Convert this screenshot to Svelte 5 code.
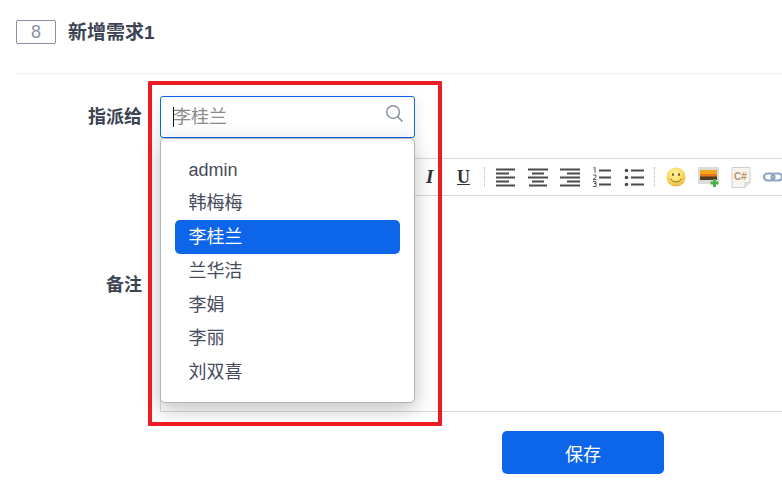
<script lang="ts">
	const users = ['admin', '韩梅梅', '李桂兰', '兰华洁', '李娟', '李丽', '刘双喜'];
	let selected = $state('李桂兰');
</script>

<div class="page">
	<header class="head">
		<span class="req-id">8</span>
		<h1 class="req-title">新增需求1</h1>
	</header>

	<form class="form" onsubmit={(e) => e.preventDefault()}>
		<div class="row">
			<label class="label" for="assign">指派给</label>
			<div class="picker">
				<input id="assign" class="search" placeholder={selected} />
				<i class="caret"></i>
				<svg class="search-icon" viewBox="0 0 20 20" width="19" height="19" fill="none" stroke="#8e93a6" stroke-width="1.6">
					<circle cx="8.5" cy="8.5" r="6.7" />
					<path d="M13.6 13.6 18 18" stroke-linecap="round" />
				</svg>
				<ul class="menu">
					{#each users as user}
						<li class="option" class:active={user === selected}>{user}</li>
					{/each}
				</ul>
			</div>
		</div>

		<div class="row note">
			<span class="label">备注</span>
			<div class="editor">
				<div class="toolbar">
					<span class="tool-i">I</span>
					<span class="tool-u">U</span>
					<i class="sep sep-a"></i>
					<svg class="ico" viewBox="0 0 20 20" width="20" height="20" stroke="#4a4a4a" stroke-width="1.8">
						<path d="M0 2.500h19M0 6.500h13M0 10.500h19M0 14.500h13M0 18.500h19" />
					</svg>
					<svg class="ico" viewBox="0 0 20 20" width="20" height="20" stroke="#4a4a4a" stroke-width="1.8">
						<path d="M0 2.500h20M4 6.500h12M0 10.500h20M4 14.500h12M1 18.500h18" />
					</svg>
					<svg class="ico" viewBox="0 0 20 20" width="20" height="20" stroke="#4a4a4a" stroke-width="1.8">
						<path d="M0 2.500h20M7 6.500h13M0 10.500h20M7 14.500h13M0 18.500h20" />
					</svg>
					<svg class="ico" viewBox="0 0 20 20" width="20" height="20" stroke="#4a4a4a">
						<path d="M7 3.500h12M7 10.500h12M7 17.500h12" stroke-width="1.800" />
						<path d="M1.500 1 3 .5V6M1 8h3v2.200L1 12.500h3.400M1 14.500h3v2H2.200h1.800v3H1" stroke-width=".9" fill="none" />
					</svg>
					<svg class="ico" viewBox="0 0 20 20" width="20" height="20" stroke="#4a4a4a">
						<path d="M7 3.500h13M7 10.500h13M7 17.500h13" stroke-width="1.800" />
						<circle cx="2.500" cy="3.500" r="1.800" fill="#4a4a4a" stroke="none" />
						<circle cx="2.500" cy="10.500" r="1.800" fill="#4a4a4a" stroke="none" />
						<circle cx="2.500" cy="17.500" r="1.800" fill="#4a4a4a" stroke="none" />
					</svg>
					<i class="sep sep-b"></i>
					<svg class="ico" viewBox="0 0 20 20" width="20" height="20">
						<defs>
							<radialGradient id="face" cx=".45" cy=".35" r=".7">
								<stop offset="0" stop-color="#fff3a8" />
								<stop offset=".6" stop-color="#fbd85c" />
								<stop offset="1" stop-color="#e8ab3a" />
							</radialGradient>
						</defs>
						<circle cx="10" cy="10" r="9.600" fill="url(#face)" />
						<ellipse cx="7" cy="7.500" rx="1" ry="1.600" fill="#6b5a20" />
						<ellipse cx="13" cy="7.500" rx="1" ry="1.600" fill="#6b5a20" />
						<path d="M4.500 11.500c1.500 4.500 9.500 4.500 11 0" fill="none" stroke="#8a6d20" stroke-width="1" />
					</svg>
					<svg class="ico" viewBox="0 0 21 21" width="21" height="21">
						<rect x="0" y="0" width="21" height="17" fill="#dcdcdc" />
						<rect x="2" y="3" width="17" height="5" fill="#f2a51f" />
						<rect x="2" y="8" width="17" height="5" fill="#4d3d24" />
						<path d="M2 7h17v2.500H2z" fill="#e8791a" />
						<path d="M15 12h3v2.500h2.500v3H18V20h-3v-2.500h-2.500v-3H15z" fill="#4fb04f" />
					</svg>
					<svg class="ico" viewBox="0 0 20 21" width="20" height="21">
						<path d="M1 .5h18v15l-5 5H1z" fill="#f7f5ef" stroke="#cfcfcf" />
						<path d="M19 15.500h-5v5" fill="#e6e6e6" stroke="#cfcfcf" />
						<text x="3" y="13" font-size="10" font-weight="700" font-family="Liberation Sans, sans-serif" fill="#b89468">C#</text>
					</svg>
					<svg class="ico" viewBox="0 0 20 20" width="20" height="20" fill="none" stroke="#8fa3c4" stroke-width="2.200">
						<rect x="1" y="6.500" width="10.500" height="7" rx="3.500" />
						<rect x="8.500" y="6.500" width="10.500" height="7" rx="3.500" />
					</svg>
				</div>
				<div class="editor-body"></div>
			</div>
		</div>

		<div class="actions">
			<button class="save" type="submit">保存</button>
		</div>
	</form>

	<div class="annotation"></div>
</div>

<style>
	:global(body) {
		background: #fff;
		overflow: hidden;
	}

	.page {
		position: relative;
		width: 782px;
		height: 504px;
		overflow: hidden;
		color: #3c4353;
		font-family: 'Liberation Sans', 'Noto Sans CJK SC', sans-serif;
	}

	/* Title */
	.head {
		display: flex;
		align-items: center;
		gap: 12px;
		height: 74px;
		margin-left: 16px;
		padding-bottom: 10px;
		box-sizing: border-box;
		border-bottom: 1px solid #eceef0;
	}

	.req-id {
		box-sizing: border-box;
		width: 40px;
		height: 24px;
		border: 1px solid #8a90a5;
		border-radius: 2px;
		text-align: center;
		font-size: 18px;
		line-height: 22px;
		color: #8a90a5;
	}

	.req-title {
		margin: 0 0 2px;
		font-size: 19px;
		font-weight: 700;
		color: #3c4353;
	}

	/* Form */
	.form {
		padding-top: 22px;
	}

	.row {
		display: flex;
		align-items: center;
		gap: 18px;
		margin-bottom: 20px;
	}

	.note {
		margin-bottom: 19px;
	}

	.label {
		flex: none;
		width: 142px;
		padding-bottom: 4px;
		text-align: right;
		font-size: 18px;
		font-weight: 700;
		color: #3c4353;
	}

	.picker {
		position: relative;
		width: 255px;
		height: 42px;
	}

	.search {
		box-sizing: border-box;
		width: 100%;
		height: 42px;
		padding: 0 40px 0 12px;
		border: 1px solid #0d65ea;
		border-radius: 3px;
		outline: none;
		font: inherit;
		font-size: 18px;
		box-shadow: 0 4px 14px rgba(0, 0, 0, 0.12);
	}

	.search::placeholder {
		color: #8a8a8a;
		opacity: 1;
	}

	.caret {
		position: absolute;
		left: 13px;
		top: 11px;
		width: 1px;
		height: 20px;
		background: #111;
	}

	.search-icon {
		position: absolute;
		right: 11px;
		top: 8px;
	}

	.menu {
		position: absolute;
		z-index: 2;
		top: 42px;
		left: 0;
		box-sizing: border-box;
		width: 255px;
		height: 265px;
		margin: 0;
		padding: 13.5px 14px;
		list-style: none;
		background: #fff;
		border: 1px solid #b4b4b4;
		border-radius: 5px;
		box-shadow: 0 6px 20px rgba(0, 0, 0, 0.25);
	}

	.option {
		height: 33.75px;
		padding-left: 13.5px;
		border-radius: 5px;
		font-size: 18px;
		line-height: 35px;
		color: #464c5c;
	}

	.option.active {
		background: #0d65ea;
		color: #fff;
	}

	/* Editor */
	.editor {
		box-sizing: border-box;
		flex: none;
		width: 640px;
		height: 254px;
		border: 1px solid #d9d9d9;
	}

	.toolbar {
		display: flex;
		align-items: center;
		height: 36px;
		padding-left: 265px;
		border-bottom: 1px solid #d9d9d9;
		background: #fff;
	}

	.tool-i {
		flex: none;
		width: 12px;
		font: italic 700 19px 'Liberation Serif', serif;
		color: #333;
	}

	.tool-u {
		flex: none;
		margin-left: 19px;
		width: 13px;
		font: 700 18px 'Liberation Serif', serif;
		text-decoration: underline;
		color: #333;
	}

	.sep {
		flex: none;
		width: 0;
		height: 20px;
		border-left: 1px dotted #bbb;
	}

	.sep-a {
		margin: 0 11px 0 14px;
	}

	.sep-b {
		margin: 0 11px 0 -2px;
	}

	.ico {
		flex: none;
		margin-right: 12px;
	}

	.save {
		width: 162px;
		height: 43px;
		margin-left: 502px;
		border: none;
		border-radius: 5px;
		background: #0d65ea;
		color: #fff;
		font: inherit;
		font-size: 18px;
	}

	.annotation {
		position: absolute;
		z-index: 3;
		left: 148px;
		top: 81px;
		box-sizing: border-box;
		width: 294px;
		height: 345px;
		border: 4px solid #ed1c24;
		border-radius: 1px;
		pointer-events: none;
	}
</style>
